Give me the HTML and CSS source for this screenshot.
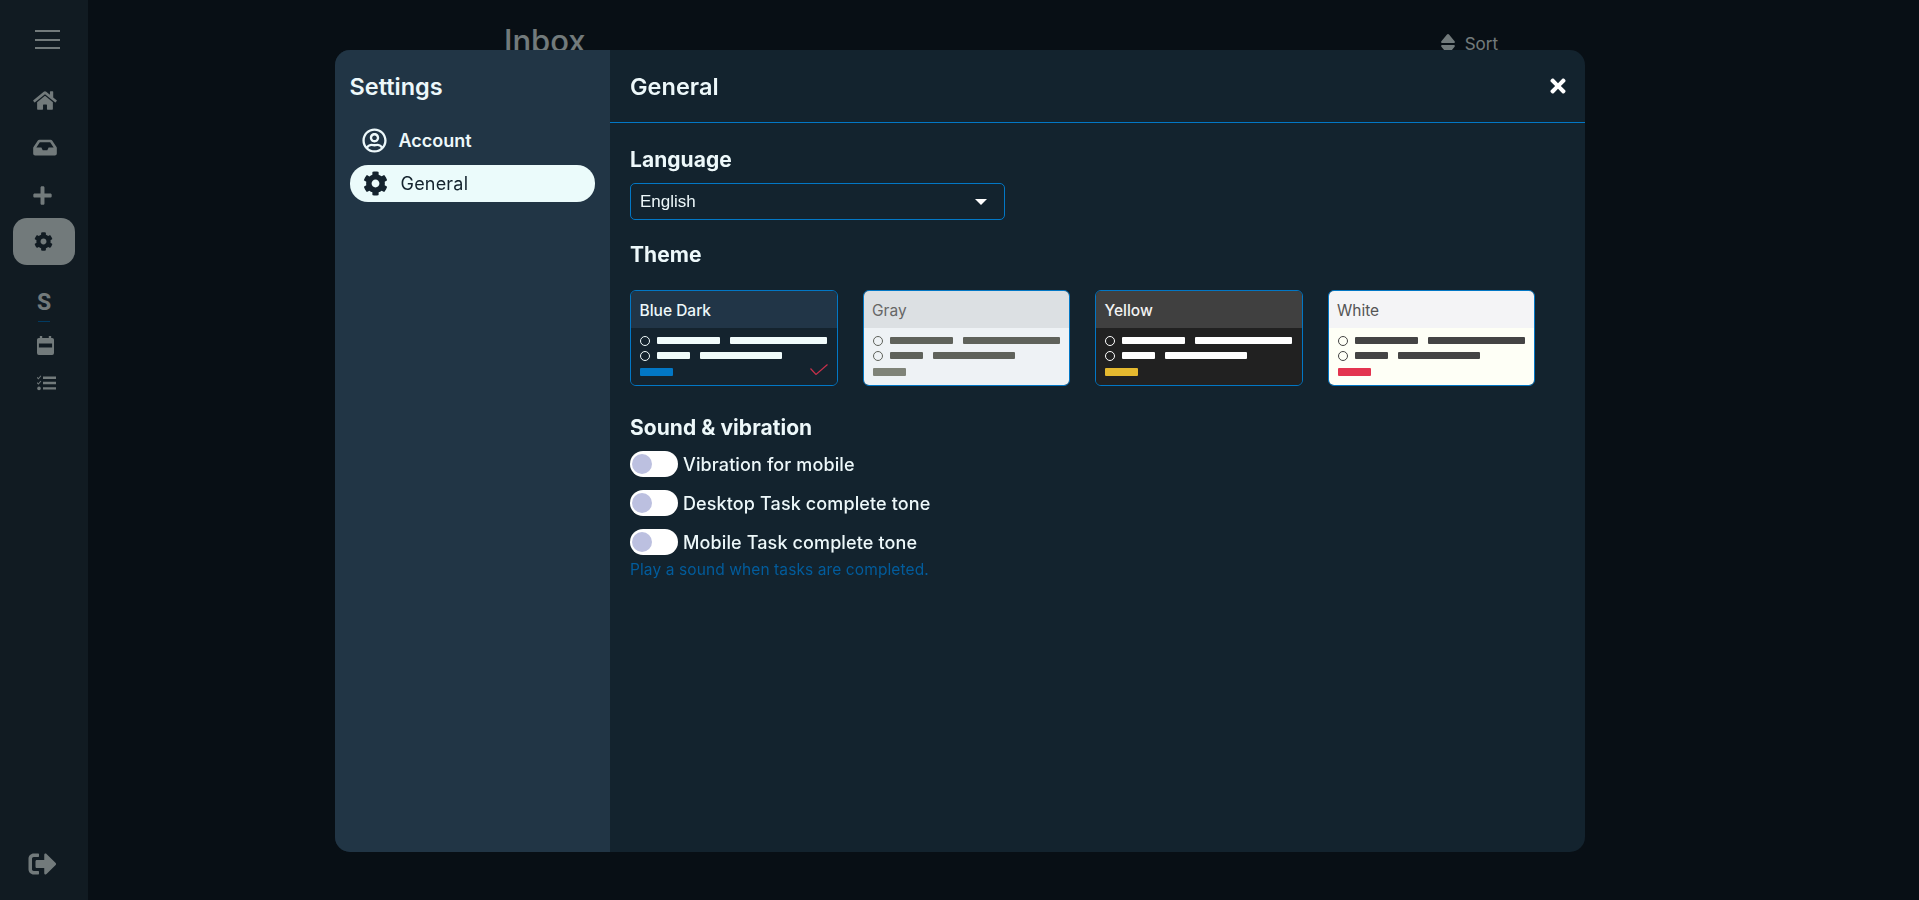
FILE: index.html
```html
<!DOCTYPE html>
<html lang="en">
<head>
    <meta charset="UTF-8">
    <meta name="viewport" content="width=device-width, initial-scale=1.0">
    <title>Settings</title>
    <link rel="stylesheet" href="styles.css">
</head>
<body>
    <svg class="sprite" xmlns="http://www.w3.org/2000/svg">
        <symbol id="i-gear" viewBox="0 0 512 512"><path d="M487.4 315.7l-42.6-24.6c4.3-23.2 4.3-47 0-70.2l42.6-24.6c4.9-2.8 7.1-8.6 5.5-14-11.1-35.6-30-67.8-54.7-94.6-3.8-4.1-10-5.1-14.8-2.3L380.8 110c-17.9-15.4-38.5-27.3-60.8-35.1V25.8c0-5.6-3.9-10.5-9.4-11.7-36.7-8.2-74.3-7.8-109.2 0-5.5 1.2-9.4 6.1-9.4 11.7V75c-22.2 7.9-42.8 19.8-60.8 35.1L88.7 85.5c-4.9-2.8-11-1.9-14.8 2.3-24.7 26.7-43.6 58.9-54.7 94.6-1.7 5.4.6 11.2 5.5 14L67.3 221c-4.3 23.2-4.3 47 0 70.2l-42.6 24.6c-4.9 2.8-7.1 8.6-5.5 14 11.1 35.6 30 67.8 54.7 94.6 3.8 4.1 10 5.1 14.8 2.3l42.6-24.6c17.9 15.4 38.5 27.3 60.8 35.1v49.2c0 5.6 3.9 10.5 9.4 11.7 36.7 8.2 74.3 7.8 109.2 0 5.5-1.2 9.4-6.1 9.4-11.7v-49.2c22.2-7.9 42.8-19.8 60.8-35.1l42.6 24.6c4.9 2.8 11 1.9 14.8-2.3 24.7-26.7 43.6-58.9 54.7-94.6 1.5-5.5-.7-11.3-5.6-14.1zM256 336c-44.1 0-80-35.9-80-80s35.9-80 80-80 80 35.9 80 80-35.9 80-80 80z"/></symbol>
    </svg>

    <div class="app">
        <nav class="sidebar">
            <div class="hamburger"><span></span><span></span><span></span></div>
            <svg class="nav-home" viewBox="0 0 576 512"><path d="M280.37 148.26L96 300.11V464a16 16 0 0 0 16 16l112.06-.29a16 16 0 0 0 15.92-16V368a16 16 0 0 1 16-16h64a16 16 0 0 1 16 16v95.64a16 16 0 0 0 16 16.05L464 480a16 16 0 0 0 16-16V300L295.67 148.26a12.19 12.19 0 0 0-15.3 0zM571.6 251.47L488 182.56V44.05a12 12 0 0 0-12-12h-56a12 12 0 0 0-12 12v72.61L318.47 43a48 48 0 0 0-61 0L4.34 251.47a12 12 0 0 0-1.6 16.9l25.5 31A12 12 0 0 0 45.15 301l235.22-193.74a12.19 12.19 0 0 1 15.3 0L530.9 301a12 12 0 0 0 16.9-1.6l25.5-31a12 12 0 0 0-1.7-16.93z"/></svg>
            <svg class="nav-inbox" viewBox="0 0 576 512"><path d="M567.938 243.908L462.25 85.374A48.003 48.003 0 0 0 422.311 64H153.689a48 48 0 0 0-39.938 21.374L8.062 243.908A47.994 47.994 0 0 0 0 270.533V400c0 26.51 21.49 48 48 48h480c26.51 0 48-21.49 48-48V270.533a47.994 47.994 0 0 0-8.062-26.625zM162.252 128h251.497l85.333 128H376l-32 64H232l-32-64H76.918l85.334-128z"/></svg>
            <svg class="nav-plus" viewBox="0 0 448 512"><path d="M416 208H272V64c0-17.67-14.33-32-32-32h-32c-17.67 0-32 14.33-32 32v144H32c-17.67 0-32 14.33-32 32v32c0 17.67 14.33 32 32 32h144v144c0 17.67 14.33 32 32 32h32c17.67 0 32-14.33 32-32V304h144c17.67 0 32-14.33 32-32v-32c0-17.67-14.33-32-32-32z"/></svg>
            <div class="nav-active"><svg class="gear-small"><use href="#i-gear"/></svg></div>
            <div class="nav-letter">S</div>
            <svg class="nav-calendar" viewBox="0 0 18 20"><path d="M3 0h2.5v2h7V0H15v2h1a2 2 0 0 1 2 2v14a2 2 0 0 1-2 2H2a2 2 0 0 1-2-2V4a2 2 0 0 1 2-2h1zM2 8v4h14V8z" fill-rule="evenodd"/></svg>
            <svg class="nav-tasks" viewBox="0 0 19 16"><path d="M6 1.5h13v2.4H6zM6 6.8h13v2.4H6zM6 12.2h13v2.4H6z"/><path d="M.4 2l1 1L3.6.4l.7.6-2.9 3.4L-.2 2.7zM.4 7.3l1 1 2.2-2.6.7.6-2.9 3.4-1.6-1.7z"/><circle cx="2" cy="13.4" r="1.8"/></svg>
            <svg class="nav-logout" viewBox="0 0 512 512"><path d="M497 273L329 441c-15 15-41 4.5-41-17v-96H152c-13.3 0-24-10.7-24-24v-96c0-13.3 10.7-24 24-24h136V88c0-21.4 25.9-32 41-17l168 168c9.3 9.4 9.3 24.6 0 34zM192 436v-40c0-6.6-5.4-12-12-12H96c-17.7 0-32-14.3-32-32V160c0-17.7 14.3-32 32-32h84c6.6 0 12-5.4 12-12V76c0-6.6-5.4-12-12-12H96c-53 0-96 43-96 96v192c0 53 43 96 96 96h84c6.6 0 12-5.4 12-12z"/></svg>
        </nav>

        <main class="content">
            <h1 class="page-title">Inbox</h1>
            <div class="sort">
                <svg class="sort-icon" viewBox="0 0 14 20"><path d="M7 0c.4 0 .8.2 1 .5l5.6 6.8c.6.7.1 1.7-.8 1.7H1.200c-.9 0-1.400-1-.8-1.700L6 .5c.2-.3.6-.5 1-.5zM1.200 11h11.600c.9 0 1.400 1 .8 1.700L8 19.500c-.5.6-1.500.6-2 0L.4 12.700c-.6-.7-.1-1.700.8-1.700z"/></svg>
                <span>Sort</span>
            </div>
        </main>
    </div>

    <div class="overlay">
        <div class="modal">
            <aside class="modal-side">
                <h2 class="side-title">Settings</h2>
                <div class="side-item side-account">
                    <svg class="side-icon" viewBox="0 0 496 512"><path d="M248 104c-53 0-96 43-96 96s43 96 96 96 96-43 96-96-43-96-96-96zm0 144c-26.5 0-48-21.5-48-48s21.5-48 48-48 48 21.5 48 48-21.5 48-48 48zm0-240C111 8 0 119 0 256s111 248 248 248 248-111 248-248S385 8 248 8zm0 448c-49.7 0-95.1-18.3-130.1-48.4 14.9-23 40.4-38.6 69.6-39.5 20.8 6.4 40.6 9.6 60.5 9.6s39.7-3.1 60.5-9.6c29.2 1 54.7 16.5 69.6 39.5-35 30.1-80.4 48.4-130.1 48.4zm162.7-84.1c-24.4-31.4-62.1-51.9-105.1-51.9-10.2 0-26 9.6-57.6 9.6-31.5 0-47.4-9.6-57.6-9.6-42.9 0-80.6 20.5-105.1 51.9C61.9 339.2 48 299.2 48 256c0-110.3 89.7-200 200-200s200 89.7 200 200c0 43.2-13.9 83.2-37.3 115.9z"/></svg>
                    <span>Account</span>
                </div>
                <div class="side-item side-selected">
                    <svg class="side-icon"><use href="#i-gear"/></svg>
                    <span>General</span>
                </div>
            </aside>

            <section class="modal-main">
                <header class="modal-head">
                    <h2 class="head-title">General</h2>
                    <svg class="close" viewBox="0 0 352 512"><path d="M242.72 256l100.07-100.07c12.28-12.28 12.28-32.19 0-44.48l-22.24-22.24c-12.28-12.28-32.19-12.28-44.48 0L176 189.28 75.93 89.21c-12.28-12.28-32.19-12.28-44.48 0L9.21 111.45c-12.28 12.28-12.28 32.19 0 44.48L109.28 256 9.21 356.07c-12.28 12.28-12.28 32.19 0 44.48l22.24 22.24c12.28 12.28 32.2 12.28 44.48 0L176 322.72l100.07 100.07c12.28 12.28 32.2 12.28 44.48 0l22.24-22.24c12.28-12.28 12.28-32.19 0-44.48L242.72 256z"/></svg>
                </header>

                <div class="modal-body">
                    <h3 class="section-title">Language</h3>
                    <div class="select">
                        <span>English</span>
                        <i class="caret"></i>
                    </div>

                    <h3 class="section-title theme-title">Theme</h3>
                    <div class="themes">
                        <div class="theme theme-blue">
                            <div class="theme-head">Blue Dark</div>
                            <div class="theme-body">
                                <div class="theme-row"><i class="dot"></i><b class="bar w63"></b><b class="bar w97"></b></div>
                                <div class="theme-row"><i class="dot"></i><b class="bar w33"></b><b class="bar w82"></b></div>
                                <div class="theme-foot">
                                    <b class="accent"></b>
                                    <svg class="check" viewBox="0 0 18 11"><path d="M.5 4.5l5.5 6L17.500.5" fill="none" stroke="#c4304a" stroke-width="1.2"/></svg>
                                </div>
                            </div>
                        </div>
                        <div class="theme theme-gray">
                            <div class="theme-head">Gray</div>
                            <div class="theme-body">
                                <div class="theme-row"><i class="dot"></i><b class="bar w63"></b><b class="bar w97"></b></div>
                                <div class="theme-row"><i class="dot"></i><b class="bar w33"></b><b class="bar w82"></b></div>
                                <div class="theme-foot"><b class="accent"></b></div>
                            </div>
                        </div>
                        <div class="theme theme-yellow">
                            <div class="theme-head">Yellow</div>
                            <div class="theme-body">
                                <div class="theme-row"><i class="dot"></i><b class="bar w63"></b><b class="bar w97"></b></div>
                                <div class="theme-row"><i class="dot"></i><b class="bar w33"></b><b class="bar w82"></b></div>
                                <div class="theme-foot"><b class="accent"></b></div>
                            </div>
                        </div>
                        <div class="theme theme-white">
                            <div class="theme-head">White</div>
                            <div class="theme-body">
                                <div class="theme-row"><i class="dot"></i><b class="bar w63"></b><b class="bar w97"></b></div>
                                <div class="theme-row"><i class="dot"></i><b class="bar w33"></b><b class="bar w82"></b></div>
                                <div class="theme-foot"><b class="accent"></b></div>
                            </div>
                        </div>
                    </div>

                    <h3 class="section-title sound-title">Sound &amp; vibration</h3>
                    <div class="toggles">
                        <div class="toggle-row"><i class="toggle"></i><span>Vibration for mobile</span></div>
                        <div class="toggle-row"><i class="toggle"></i><span>Desktop Task complete tone</span></div>
                        <div class="toggle-row"><i class="toggle"></i><span>Mobile Task complete tone</span></div>
                    </div>
                    <p class="hint">Play a sound when tasks are completed.</p>
                </div>
            </section>
        </div>
    </div>
</body>
</html>
```

FILE: styles.css
```css
* {
    box-sizing: border-box;
}

html, body {
    height: 100%;
}

body {
    margin: 0;
    background-color: #101e2a;
    color: #edf8fa;
    font-family: "Inter", "Open Sans", sans-serif;
    overflow: hidden;
}

h1, h2, h3, p {
    margin: 0;
}

.sprite {
    display: none;
}

/* page behind the modal */
.app {
    display: flex;
    height: 100%;
}

.sidebar {
    width: 88px;
    flex-shrink: 0;
    height: 100%;
    background-color: #223645;
    display: flex;
    flex-direction: column;
    align-items: flex-start;
    padding-top: 30px;
    fill: #e5f5f7;
}

.hamburger {
    width: 25px;
    margin-left: 35px;
    display: flex;
    flex-direction: column;
    gap: 6.5px;
}

.hamburger span {
    display: block;
    height: 2px;
    background-color: #e5f5f7;
}

.nav-home {
    width: 24px;
    height: 21px;
    margin: 41px 0 0 33px;
}

.nav-inbox {
    width: 24px;
    height: 21px;
    margin: 26px 0 0 33px;
}

.nav-plus {
    width: 19px;
    height: 21px;
    margin: 27px 0 0 33px;
}

.nav-active {
    width: 62px;
    height: 47px;
    margin: 12px 0 0 13px;
    border-radius: 14px;
    background-color: #e5f5f7;
    display: flex;
    align-items: center;
    justify-content: center;
    fill: #223645;
}

.gear-small {
    width: 19px;
    height: 19px;
    margin-right: 2px;
}

.nav-letter {
    width: 12px;
    margin: 26px 0 0 38px;
    padding-bottom: 7px;
    border-bottom: 1px solid #0277c5;
    font-family: "Roboto", sans-serif;
    font-weight: 700;
    font-size: 23px;
    line-height: 23px;
    display: flex;
    justify-content: center;
    color: #e5f5f7;
}

.nav-calendar {
    width: 17px;
    height: 19px;
    margin: 14px 0 0 37px;
}

.nav-tasks {
    width: 19px;
    height: 16px;
    margin: 20px 0 0 37px;
}

.nav-logout {
    width: 29px;
    height: 28px;
    margin: auto 0 22px 28px;
}

.content {
    flex: 1;
    display: flex;
    align-items: flex-start;
    justify-content: space-between;
    padding: 20px 421px 0 416px;
}

.page-title {
    font-size: 31px;
    line-height: 42px;
    font-weight: 500;
    color: #e5f5f7;
}

.sort {
    display: flex;
    align-items: center;
    gap: 10px;
    padding-top: 14px;
    font-size: 17px;
    color: #e5f5f7;
    fill: #e5f5f7;
}

.sort-icon {
    width: 14px;
    height: 20px;
}

/* modal */
.overlay {
    position: fixed;
    inset: 0;
    background-color: rgba(0, 0, 0, 0.5);
    display: flex;
    justify-content: center;
    padding-top: 50px;
}

.modal {
    width: 1250px;
    height: 802px;
    border-radius: 15px;
    overflow: hidden;
    display: flex;
    background-color: #13232e;
}

.modal-side {
    width: 275px;
    flex-shrink: 0;
    background-color: #213545;
    padding: 0 15px;
    fill: #edf8fa;
}

.side-title {
    font-size: 23.5px;
    line-height: 36px;
    font-weight: 600;
    margin: 19px 0 17px;
}

.side-item {
    display: flex;
    align-items: center;
    height: 37px;
    font-size: 18px;
    padding-left: 13px;
    gap: 13px;
    letter-spacing: 0.2px;
}

.side-account {
    font-weight: 600;
    margin-bottom: 6px;
    padding-left: 12px;
    gap: 12px;
    letter-spacing: 0;
}

.side-selected {
    background-color: #ebfbfb;
    color: #14232e;
    fill: #14232e;
    border-radius: 18px;
    height: 37px;
}

.side-icon {
    width: 25px;
    height: 25px;
    flex-shrink: 0;
}

.modal-main {
    flex: 1;
    min-width: 0;
}

.modal-head {
    height: 73px;
    display: flex;
    align-items: center;
    justify-content: space-between;
    padding: 0 19px 0 20.5px;
    border-bottom: 1.5px solid #0277c5;
    fill: #ffffff;
}

.head-title {
    font-size: 23.5px;
    font-weight: 600;
}

.close {
    width: 16px;
    height: 22px;
}

.modal-body {
    padding: 22px 20px 0 20.5px;
}

.section-title {
    font-size: 21px;
    line-height: 30px;
    font-weight: 700;
    letter-spacing: 0.05px;
}

.select {
    width: 375px;
    height: 37px;
    margin-top: 8px;
    border: 1.5px solid #0277c5;
    border-radius: 5px;
    display: flex;
    align-items: center;
    justify-content: space-between;
    padding: 0 17px 0 9px;
    font-family: "Liberation Sans", Arial, sans-serif;
    font-size: 17px;
}

.caret {
    width: 0;
    height: 0;
    border-left: 6px solid transparent;
    border-right: 6px solid transparent;
    border-top: 6px solid #ffffff;
}

.theme-title {
    margin-top: 20px;
}

.themes {
    display: flex;
    gap: 25px;
    margin-top: 20px;
}

.theme {
    width: 207.5px;
    height: 96px;
    border: 1.5px solid #0277c5;
    border-radius: 6px;
    overflow: hidden;
    display: flex;
    flex-direction: column;
}

.theme-head {
    height: 37px;
    flex-shrink: 0;
    display: flex;
    align-items: center;
    padding: 2px 0 0 8.5px;
    font-size: 15.5px;
    font-weight: var(--head-weight);
    color: var(--head-text);
    background-color: var(--head-bg);
}

.theme-body {
    flex: 1;
    background-color: var(--body-bg);
    padding: 5px 8.5px 0 9px;
}

.theme-row {
    display: flex;
    align-items: center;
    gap: 10px;
    height: 15px;
}

.dot {
    width: 10px;
    height: 10px;
    border-radius: 50%;
    border: 1.5px solid var(--bar);
    margin-right: -3px;
}

.bar {
    height: 7px;
    border-radius: 1px;
    background-color: var(--bar);
}

.w63 { width: 63px; }
.w97 { width: 97px; }
.w33 { width: 33px; }
.w82 { width: 82px; }

.theme-foot {
    display: flex;
    align-items: flex-start;
    justify-content: space-between;
    height: 16px;
}

.accent {
    width: 33px;
    height: 8px;
    margin-top: 5px;
    border-radius: 1px;
    background-color: var(--accent);
}

.check {
    width: 18px;
    height: 11px;
    margin-top: 1px;
}

.theme-blue {
    --head-bg: #213547;
    --head-text: #edf8fa;
    --head-weight: 500;
    --body-bg: #14232e;
    --bar: #f0fbfb;
    --accent: #0277c5;
}

.theme-gray {
    --head-bg: #dce0e3;
    --head-text: #666666;
    --head-weight: 400;
    --body-bg: #eef2f5;
    --bar: #5f625b;
    --accent: #7f8378;
}

.theme-yellow {
    --head-bg: #404040;
    --head-text: #f2f2f2;
    --head-weight: 500;
    --body-bg: #212121;
    --bar: #ffffff;
    --accent: #e5b92f;
}

.theme-white {
    --head-bg: #f4f4f6;
    --head-text: #555555;
    --head-weight: 400;
    --body-bg: #fefff6;
    --bar: #444444;
    --accent: #e3344f;
}

.sound-title {
    margin-top: 27px;
}

.toggles {
    display: flex;
    flex-direction: column;
    gap: 13px;
    margin-top: 8px;
}

.toggle-row {
    display: flex;
    align-items: center;
    gap: 5px;
    font-size: 18px;
    font-weight: 500;
    letter-spacing: 0.12px;
    height: 26px;
}

.toggle {
    position: relative;
    width: 48px;
    height: 26px;
    border-radius: 13px;
    background-color: #ffffff;
}

.toggle::after {
    content: "";
    position: absolute;
    left: 0;
    top: 0;
    margin: 3px 0 3px 2px;
    width: 20px;
    height: 20px;
    border-radius: 50%;
    background-color: #bcc0e0;
}

.hint {
    margin-top: 4px;
    font-size: 15.5px;
    line-height: 22px;
    letter-spacing: 0.1px;
    color: #025c9c;
}
```
